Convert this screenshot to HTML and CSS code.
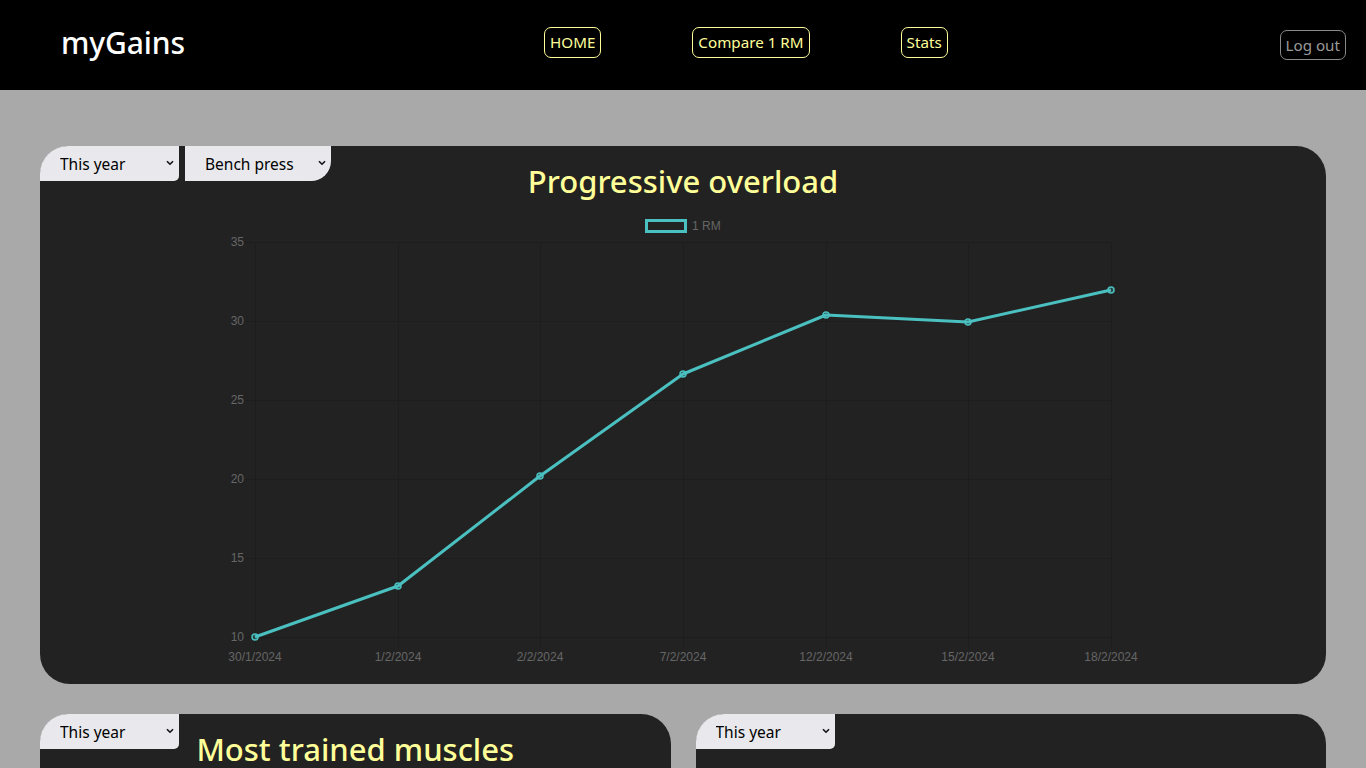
FILE: index.html
```html
<!DOCTYPE html>
<html lang="en">
<head>
<meta charset="utf-8">
<title>myGains</title>
<link rel="stylesheet" href="styles.css">
</head>
<body>
<header class="topbar">
  <div class="logo">myGains</div>
  <nav class="nav">
    <a class="nav-link" href="#">HOME</a>
    <a class="nav-link" href="#">Compare 1 RM</a>
    <a class="nav-link" href="#">Stats</a>
  </nav>
  <button class="logout">Log out</button>
</header>

<main class="content">
  <section class="card card-main">
    <div class="filters">
      <label class="sel-wrap">
        <select class="sel sel-first"><option>This year</option></select>
        <svg class="chev" width="8" height="6" viewBox="0 0 8 6"><path d="M1 1.2 L4 4.2 L7 1.2" fill="none" stroke="#111" stroke-width="1.6"/></svg>
      </label>
      <label class="sel-wrap">
        <select class="sel sel-last"><option>Bench press</option></select>
        <svg class="chev" width="8" height="6" viewBox="0 0 8 6"><path d="M1 1.2 L4 4.2 L7 1.2" fill="none" stroke="#111" stroke-width="1.6"/></svg>
      </label>
    </div>
    <h2 class="card-title">Progressive overload</h2>
    <svg class="chart" width="1286" height="470" viewBox="0 0 1286 470">
      <rect x="606.5" y="15.5" width="39" height="11" fill="none" stroke="#4bc0c0" stroke-width="3"/>
      <text x="652" y="25" class="tick">1 RM</text>
      <g stroke="#1d1d1d" stroke-width="1">
        <line x1="205" y1="37.5" x2="1071" y2="37.5"/>
        <line x1="205" y1="116.5" x2="1071" y2="116.5"/>
        <line x1="205" y1="195.5" x2="1071" y2="195.5"/>
        <line x1="205" y1="274.5" x2="1071" y2="274.5"/>
        <line x1="205" y1="353.5" x2="1071" y2="353.5"/>
        <line x1="205" y1="432.5" x2="1071" y2="432.5"/>
        <line x1="215.5" y1="37" x2="215.5" y2="442"/>
        <line x1="358.5" y1="37" x2="358.5" y2="442"/>
        <line x1="500.5" y1="37" x2="500.5" y2="442"/>
        <line x1="643.5" y1="37" x2="643.5" y2="442"/>
        <line x1="786.5" y1="37" x2="786.5" y2="442"/>
        <line x1="928.5" y1="37" x2="928.5" y2="442"/>
        <line x1="1071.5" y1="37" x2="1071.5" y2="442"/>
      </g>
      <g class="tick" text-anchor="end">
        <text x="204" y="41">35</text>
        <text x="204" y="120">30</text>
        <text x="204" y="199">25</text>
        <text x="204" y="278">20</text>
        <text x="204" y="357">15</text>
        <text x="204" y="436">10</text>
      </g>
      <g class="tick" text-anchor="middle">
        <text x="215" y="456">30/1/2024</text>
        <text x="358" y="456">1/2/2024</text>
        <text x="500" y="456">2/2/2024</text>
        <text x="643" y="456">7/2/2024</text>
        <text x="786" y="456">12/2/2024</text>
        <text x="928" y="456">15/2/2024</text>
        <text x="1071" y="456">18/2/2024</text>
      </g>
      <polyline points="215,432 358,381 500,271 643,169 786,110 928,117 1071,85" fill="none" stroke="#4bc0c0" stroke-width="3" stroke-linejoin="round"/>
      <g fill="rgba(75,192,192,0.2)" stroke="#4bc0c0" stroke-width="1.5">
        <circle cx="215" cy="432" r="3"/>
        <circle cx="358" cy="381" r="3"/>
        <circle cx="500" cy="271" r="3"/>
        <circle cx="643" cy="169" r="3"/>
        <circle cx="786" cy="110" r="3"/>
        <circle cx="928" cy="117" r="3"/>
        <circle cx="1071" cy="85" r="3"/>
      </g>
    </svg>
  </section>

  <div class="row">
    <section class="card card-half">
      <div class="filters">
        <label class="sel-wrap">
          <select class="sel sel-first"><option>This year</option></select>
          <svg class="chev" width="8" height="6" viewBox="0 0 8 6"><path d="M1 1.2 L4 4.2 L7 1.2" fill="none" stroke="#111" stroke-width="1.6"/></svg>
        </label>
      </div>
      <h2 class="card-title">Most trained muscles</h2>
    </section>
    <section class="card card-half">
      <div class="filters">
        <label class="sel-wrap">
          <select class="sel sel-first"><option>This year</option></select>
          <svg class="chev" width="8" height="6" viewBox="0 0 8 6"><path d="M1 1.2 L4 4.2 L7 1.2" fill="none" stroke="#111" stroke-width="1.6"/></svg>
        </label>
      </div>
      <h2 class="card-title">&nbsp;</h2>
    </section>
  </div>
</main>
</body>
</html>
```

FILE: styles.css
```css
* { box-sizing: border-box; }

html, body {
  margin: 0;
  padding: 0;
}

body {
  background: #a9a9a9;
  font-family: "Noto Sans", "Open Sans", sans-serif;
}

.topbar {
  height: 90px;
  background: #000;
  display: flex;
  align-items: center;
  padding: 0 20px 0 61px;
}

.logo {
  color: #fff;
  font-size: 30px;
  font-weight: 500;
  letter-spacing: -0.1px;
  margin-top: -6px;
}

.nav {
  display: flex;
  gap: 91px;
  margin-left: 359px;
  margin-top: -6px;
}

.nav-link {
  color: #ffff99;
  text-decoration: none;
  border: 1px solid #ffff99;
  border-radius: 7px;
  height: 31px;
  padding: 0 5px;
  font-size: 15.2px;
  display: flex;
  align-items: center;
}

.logout {
  margin-left: auto;
  background: transparent;
  color: #9a9a9a;
  border: 1px solid #8a8a8a;
  border-radius: 7px;
  height: 30px;
  padding: 0 5px;
  font-family: inherit;
  font-size: 15.2px;
}

.content {
  padding: 56px 40px 40px;
}

.card {
  background: #222;
  border-radius: 30px;
  position: relative;
}

.card-main {
  height: 538px;
}

.filters {
  position: absolute;
  top: 0;
  left: 0;
  display: flex;
  gap: 6px;
  z-index: 1;
}

.sel-wrap {
  position: relative;
  display: block;
}

.sel {
  display: block;
  height: 35px;
  border: none;
  background-color: #e9e9ed;
  color: #000;
  font-family: inherit;
  font-size: 15.5px;
  padding: 0 6px 0 20px;
  outline: none;
  appearance: none;
  -webkit-appearance: none;
}

.chev {
  position: absolute;
  right: 5px;
  top: 14px;
  pointer-events: none;
}

.sel-first {
  width: 139px;
  border-radius: 28px 0 5px 0;
}

.sel-last {
  width: 146px;
  border-radius: 0 0 20px 0;
}

.card-title {
  margin: 0;
  padding-top: 15px;
  text-align: center;
  color: #ffff99;
  font-size: 31px;
  font-weight: 500;
  line-height: 40px;
}

.chart {
  display: block;
  margin-top: 4px;
}

.tick {
  font-family: "Liberation Sans", Arial, sans-serif;
  font-size: 12px;
  fill: #666;
}

.row {
  display: flex;
  gap: 25px;
  margin-top: 30px;
}

.card-half {
  flex: 1;
  height: 400px;
}
```
